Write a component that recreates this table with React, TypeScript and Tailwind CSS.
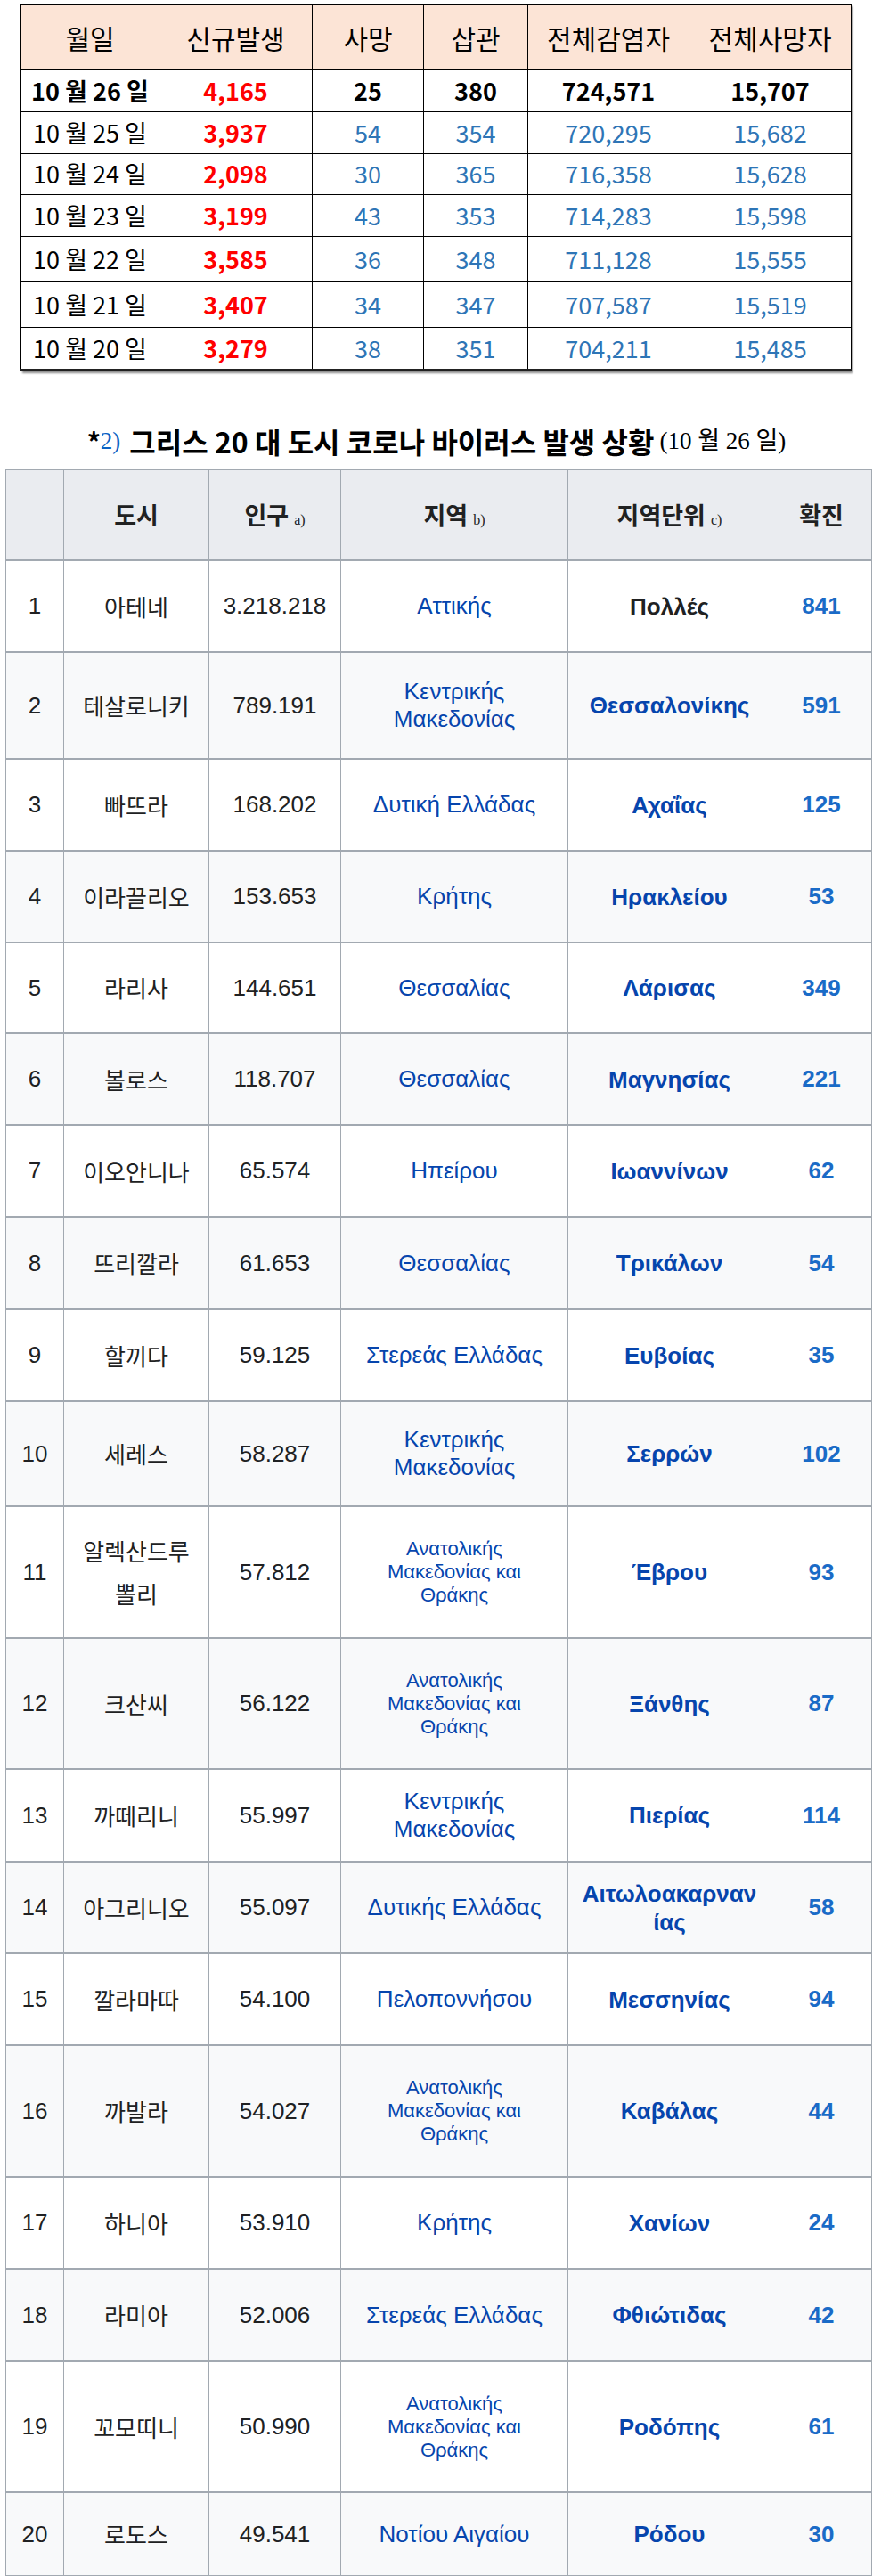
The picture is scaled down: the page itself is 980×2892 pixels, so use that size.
const kr = "font-['Noto_Sans_CJK_KR',sans-serif]";

type Daily = { date: string; nw: string; death: string; ins: string; total: string; deaths: string; h: string };

const daily: Daily[] = [
  { date: "10 월 26 일", nw: "4,165", death: "25", ins: "380", total: "724,571", deaths: "15,707", h: "h-[47px]" },
  { date: "10 월 25 일", nw: "3,937", death: "54", ins: "354", total: "720,295", deaths: "15,682", h: "h-[47px]" },
  { date: "10 월 24 일", nw: "2,098", death: "30", ins: "365", total: "716,358", deaths: "15,628", h: "h-[46px]" },
  { date: "10 월 23 일", nw: "3,199", death: "43", ins: "353", total: "714,283", deaths: "15,598", h: "h-[47px]" },
  { date: "10 월 22 일", nw: "3,585", death: "36", ins: "348", total: "711,128", deaths: "15,555", h: "h-[51px]" },
  { date: "10 월 21 일", nw: "3,407", death: "34", ins: "347", total: "707,587", deaths: "15,519", h: "h-[51px]" },
  { date: "10 월 20 일", nw: "3,279", death: "38", ins: "351", total: "704,211", deaths: "15,485", h: "h-[48px]" },
];

const AMT = "Ανατολικής Μακεδονίας και Θράκης";

type City = { n: number; city: React.ReactNode; pop: string; region: string; small?: boolean; unit: React.ReactNode; black?: boolean; cases: string; h: string };

const cities: City[] = [
  { n: 1, city: "아테네", pop: "3.218.218", region: "Αττικής", unit: "Πολλές", black: true, cases: "841", h: "h-[103px]" },
  { n: 2, city: "테살로니키", pop: "789.191", region: "Κεντρικής Μακεδονίας", unit: "Θεσσαλονίκης", cases: "591", h: "h-[120px]" },
  { n: 3, city: "빠뜨라", pop: "168.202", region: "Δυτική Ελλάδας", unit: "Αχαΐας", cases: "125", h: "h-[103px]" },
  { n: 4, city: "이라끌리오", pop: "153.653", region: "Κρήτης", unit: "Ηρακλείου", cases: "53", h: "h-[103px]" },
  { n: 5, city: "라리사", pop: "144.651", region: "Θεσσαλίας", unit: "Λάρισας", cases: "349", h: "h-[102px]" },
  { n: 6, city: "볼로스", pop: "118.707", region: "Θεσσαλίας", unit: "Μαγνησίας", cases: "221", h: "h-[103px]" },
  { n: 7, city: "이오안니나", pop: "65.574", region: "Ηπείρου", unit: "Ιωαννίνων", cases: "62", h: "h-[103px]" },
  { n: 8, city: "뜨리깔라", pop: "61.653", region: "Θεσσαλίας", unit: "Τρικάλων", cases: "54", h: "h-[104px]" },
  { n: 9, city: "할끼다", pop: "59.125", region: "Στερεάς Ελλάδας", unit: "Ευβοίας", cases: "35", h: "h-[103px]" },
  { n: 10, city: "세레스", pop: "58.287", region: "Κεντρικής Μακεδονίας", unit: "Σερρών", cases: "102", h: "h-[118px]" },
  { n: 11, city: <>알렉산드루<br />뽈리</>, pop: "57.812", region: AMT, small: true, unit: "Έβρου", cases: "93", h: "h-[148px]" },
  { n: 12, city: "크산씨", pop: "56.122", region: AMT, small: true, unit: "Ξάνθης", cases: "87", h: "h-[147px]" },
  { n: 13, city: "까떼리니", pop: "55.997", region: "Κεντρικής Μακεδονίας", unit: "Πιερίας", cases: "114", h: "h-[104px]" },
  { n: 14, city: "아그리니오", pop: "55.097", region: "Δυτικής Ελλάδας", unit: <>Αιτωλοακαρναν<br />ίας</>, cases: "58", h: "h-[103px]" },
  { n: 15, city: "깔라마따", pop: "54.100", region: "Πελοποννήσου", unit: "Μεσσηνίας", cases: "94", h: "h-[103px]" },
  { n: 16, city: "까발라", pop: "54.027", region: AMT, small: true, unit: "Καβάλας", cases: "44", h: "h-[148px]" },
  { n: 17, city: "하니아", pop: "53.910", region: "Κρήτης", unit: "Χανίων", cases: "24", h: "h-[103px]" },
  { n: 18, city: "라미아", pop: "52.006", region: "Στερεάς Ελλάδας", unit: "Φθιώτιδας", cases: "42", h: "h-[104px]" },
  { n: 19, city: "꼬모띠니", pop: "50.990", region: AMT, small: true, unit: "Ροδόπης", cases: "61", h: "h-[147px]" },
  { n: 20, city: "로도스", pop: "49.541", region: "Νοτίου Αιγαίου", unit: "Ρόδου", cases: "30", h: "h-[94px]" },
];

const DailyTable = () => (
  <div className="ml-[23px] w-[932px] shadow-[2px_2px_2px_rgba(0,0,0,0.45)]">
    <table className={`w-full table-fixed border border-black ${kr}`}>
      <colgroup>
        <col className="w-[155px]" />
        <col className="w-[172px]" />
        <col className="w-[125px]" />
        <col className="w-[117px]" />
        <col className="w-[181px]" />
        <col className="w-[182px]" />
      </colgroup>
      <thead>
        <tr className="h-[73px] bg-[#fce4d6] text-[30px] text-black">
          {["월일", "신규발생", "사망", "삽관", "전체감염자", "전체사망자"].map((t) => (
            <th key={t} className="border border-black font-normal">{t}</th>
          ))}
        </tr>
      </thead>
      <tbody className="text-[27px] text-center">
        {daily.map((d, i) => {
          const first = i === 0;
          const num = first ? "font-bold text-black" : "text-[#2e75b6]";
          return (
            <tr key={d.date} className={`${d.h} ${i === daily.length - 1 ? "border-b-[3px] border-b-[#222]" : ""}`}>
              <td className={`border border-black ${first ? "font-bold" : ""} text-black`}>{d.date}</td>
              <td className="border border-black font-bold text-[#ff0000]">{d.nw}</td>
              <td className={`border border-black ${num}`}>{d.death}</td>
              <td className={`border border-black ${num}`}>{d.ins}</td>
              <td className={`border border-black ${num}`}>{d.total}</td>
              <td className={`border border-black ${num}`}>{d.deaths}</td>
            </tr>
          );
        })}
      </tbody>
    </table>
  </div>
);

const Note = ({ t }: { t: string }) => (
  <span className="ml-[6px] font-['Liberation_Serif',serif] text-[16px] font-normal">{t}</span>
);

const CityTable = () => {
  const cell = "border-x border-y-2 border-[#a2a9b1] text-center align-middle";
  return (
    <table className="ml-[6px] w-[972px] table-fixed font-['Liberation_Sans','Noto_Sans_CJK_KR',sans-serif] text-[26px] text-[#202122]">
      <colgroup>
        <col className="w-[65px]" />
        <col className="w-[163px]" />
        <col className="w-[148px]" />
        <col className="w-[255px]" />
        <col className="w-[228px]" />
        <col className="w-[113px]" />
      </colgroup>
      <thead>
        <tr className={`h-[102px] bg-[#eaecf0] ${kr} text-[27px] font-bold`}>
          <th className={cell}></th>
          <th className={cell}>도시</th>
          <th className={cell}>인구<Note t="a)" /></th>
          <th className={cell}>지역<Note t="b)" /></th>
          <th className={cell}>지역단위<Note t="c)" /></th>
          <th className={cell}>확진</th>
        </tr>
      </thead>
      <tbody>
        {cities.map((c) => (
          <tr key={c.n} className={`${c.h} ${c.n % 2 === 0 ? "bg-[#f8f9fa]" : "bg-white"}`}>
            <td className={cell}>{c.n}</td>
            <td className={`${cell} ${kr} leading-[48px]`}>{c.city}</td>
            <td className={cell}>{c.pop}</td>
            <td className={`${cell} px-2 text-[#0645ad] ${c.small ? "text-[22px] leading-[26px]" : "leading-[31px]"}`}>
              {c.small ? <>Ανατολικής<br />Μακεδονίας και<br />Θράκης</> : c.region}
            </td>
            <td className={`${cell} font-bold leading-[32px] ${c.black ? "text-[#202122]" : "text-[#0645ad]"}`}>{c.unit}</td>
            <td className={`${cell} font-bold text-[#1a6bc7]`}>{c.cases}</td>
          </tr>
        ))}
      </tbody>
    </table>
  );
};

export default function App() {
  return (
    <div className="w-[980px] bg-white pt-[5px]">
      <DailyTable />
      <div className="mt-[56px] mb-[9px] h-[44px] flex items-center justify-center whitespace-nowrap">
        <span className={`${kr} text-[30px] font-bold text-black`}>*</span>
        <span className="font-['Liberation_Serif',serif] text-[27px] text-[#0b62c4]">2)</span>
        <span className={`${kr} ml-[10px] text-[32px] font-bold text-black`}>그리스 20 대 도시 코로나 바이러스 발생 상황</span>
        <span className="ml-[6px] font-['Liberation_Serif','Noto_Sans_CJK_KR',serif] text-[27px] text-black">(10 월 26 일)</span>
      </div>
      <CityTable />
    </div>
  );
}
